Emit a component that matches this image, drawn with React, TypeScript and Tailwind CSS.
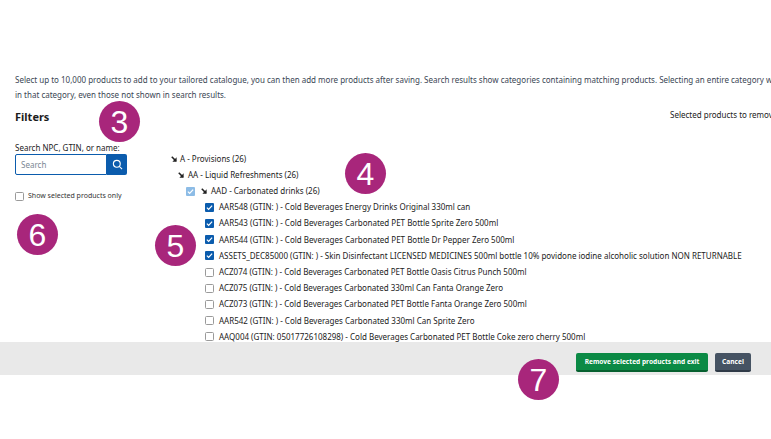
const products = [
  { label: "AAR548 (GTIN: ) - Cold Beverages Energy Drinks Original 330ml can", checked: true },
  { label: "AAR543 (GTIN: ) - Cold Beverages Carbonated PET Bottle Sprite Zero 500ml", checked: true },
  { label: "AAR544 (GTIN: ) - Cold Beverages Carbonated PET Bottle Dr Pepper Zero 500ml", checked: true },
  { label: "ASSETS_DEC85000 (GTIN: ) - Skin Disinfectant LICENSED MEDICINES 500ml bottle 10% povidone iodine alcoholic solution NON RETURNABLE", checked: true },
  { label: "ACZ074 (GTIN: ) - Cold Beverages Carbonated PET Bottle Oasis Citrus Punch 500ml", checked: false },
  { label: "ACZ075 (GTIN: ) - Cold Beverages Carbonated 330ml Can Fanta Orange Zero", checked: false },
  { label: "ACZ073 (GTIN: ) - Cold Beverages Carbonated PET Bottle Fanta Orange Zero 500ml", checked: false },
  { label: "AAR542 (GTIN: ) - Cold Beverages Carbonated 330ml Can Sprite Zero", checked: false },
  { label: "AAQ004 (GTIN: 05017726108298) - Cold Beverages Carbonated PET Bottle Coke zero cherry 500ml", checked: false },
];

function Arrow() {
  return (
    <svg className="w-[6px] h-[6px] shrink-0 text-[#222]" viewBox="0 0 8 8" fill="none" stroke="currentColor">
      <path d="M1 1l5.5 5.5" strokeWidth={2} />
      <path d="M7.5 1.8V7.5H1.8z" fill="currentColor" stroke="none" />
    </svg>
  );
}

function Check({ checked, faded }: { checked: boolean; faded?: boolean }) {
  if (!checked) {
    return <span className="w-[9px] h-[9px] shrink-0 rounded-[1.5px] border border-[#9a9a9a] bg-white" />;
  }
  return (
    <span className={`w-[9px] h-[9px] shrink-0 rounded-[1px] flex items-center justify-center ${faded ? "bg-[#8dbce6]" : "bg-[#0b5cad]"}`}>
      <svg className="w-[7px] h-[7px] text-white" viewBox="0 0 8 8" fill="none" stroke="currentColor" strokeWidth={1.4}>
        <path d="M1 4.2l2 2 4-4.4" />
      </svg>
    </span>
  );
}

function Marker({ n, className }: { n: number; className: string }) {
  return (
    <div className={`absolute w-[41px] h-[41px] rounded-full bg-[#a8267b] text-white flex items-center justify-center text-[32px] font-['Liberation_Sans',sans-serif] ${className}`}>
      {n}
    </div>
  );
}

export default function App() {
  return (
    <div className="relative w-[771px] h-[439px] overflow-hidden bg-white text-[#2b2b2b] text-[8px] font-['Noto_Sans',sans-serif]">
      <div className="h-[342px] overflow-hidden pt-[72px] pl-[15px]">
        {/* Intro */}
        <p className="whitespace-nowrap leading-[15px] text-[#3a4654]">
          Select up to 10,000 products to add to your tailored catalogue, you can then add more products after saving. Search results show categories containing matching products. Selecting an entire category will select all products
          <br />
          in that category, even those not shown in search results.
        </p>

        <div className="flex mt-[6px]">
          {/* Left: filters */}
          <div className="w-[155px] shrink-0">
            <h2 className="text-[11px] font-bold leading-[18px] text-[#1c1c1c]">Filters</h2>
            <div className="mt-[16px] leading-[12px] text-[#222]">Search NPC, GTIN, or name:</div>
            <div className="flex w-[112px] h-[21px]">
              <div className="flex-1 border border-[#0b5cad] rounded-l-[2px] pl-[5px] flex items-center text-[#7b8794]">Search</div>
              <div className="w-[20px] bg-[#0b5cad] rounded-r-[2px] flex items-center justify-center">
                <svg className="w-[11px] h-[11px] text-white" viewBox="0 0 24 24" fill="none" stroke="currentColor" strokeWidth={2.4}>
                  <circle cx="10.5" cy="10.5" r="7.5" />
                  <path d="M16 16l6 6" />
                </svg>
              </div>
            </div>
            <div className="flex items-center gap-[4px] mt-[16px]">
              <Check checked={false} />
              <span className="text-[7px] text-[#333]">Show selected products only</span>
            </div>
          </div>

          {/* Right: category tree */}
          <div className="flex-1 min-w-0 pt-[42.6px] whitespace-nowrap text-[#222]">
            <div className="h-[16.2px] flex items-center gap-[3px] pl-[1px]"><Arrow /><span>A - Provisions (26)</span></div>
            <div className="h-[16.2px] flex items-center gap-[4px] pl-[8px]"><Arrow /><span>AA - Liquid Refreshments (26)</span></div>
            <div className="h-[16.2px] flex items-center pl-[16px]">
              <Check checked faded />
              <span className="ml-[6px]"><Arrow /></span>
              <span className="ml-[4px]">AAD - Carbonated drinks (26)</span>
            </div>
            {products.map((p) => (
              <div key={p.label} className="h-[16.2px] flex items-center gap-[5px] pl-[35px]">
                <Check checked={p.checked} />
                <span>{p.label}</span>
              </div>
            ))}
          </div>
        </div>
      </div>

      {/* Footer */}
      <div className="h-[33px] bg-[#e9e9e9] flex items-start justify-end gap-[7px] pt-[11px] pr-[20px]">
        <button className="h-[19px] w-[132px] rounded-[2px] bg-[#0b8a45] border-b-2 border-[#06602f] text-white text-[6.6px] font-bold">
          Remove selected products and exit
        </button>
        <button className="h-[19px] w-[36px] rounded-[2px] bg-[#465363] border-b-2 border-[#2f3a47] text-white text-[6.6px] font-bold">
          Cancel
        </button>
      </div>

      {/* Selected products heading runs off the right edge */}
      <div className="absolute left-[670px] top-[108px] whitespace-nowrap text-[#222] leading-[14px]">Selected products to remove</div>

      {/* Numbered callouts */}
      <Marker n={3} className="left-[99px] top-[101px]" />
      <Marker n={4} className="left-[345px] top-[153px]" />
      <Marker n={5} className="left-[155px] top-[225px]" />
      <Marker n={6} className="left-[17px] top-[214px]" />
      <Marker n={7} className="left-[518px] top-[359px]" />
    </div>
  );
}
